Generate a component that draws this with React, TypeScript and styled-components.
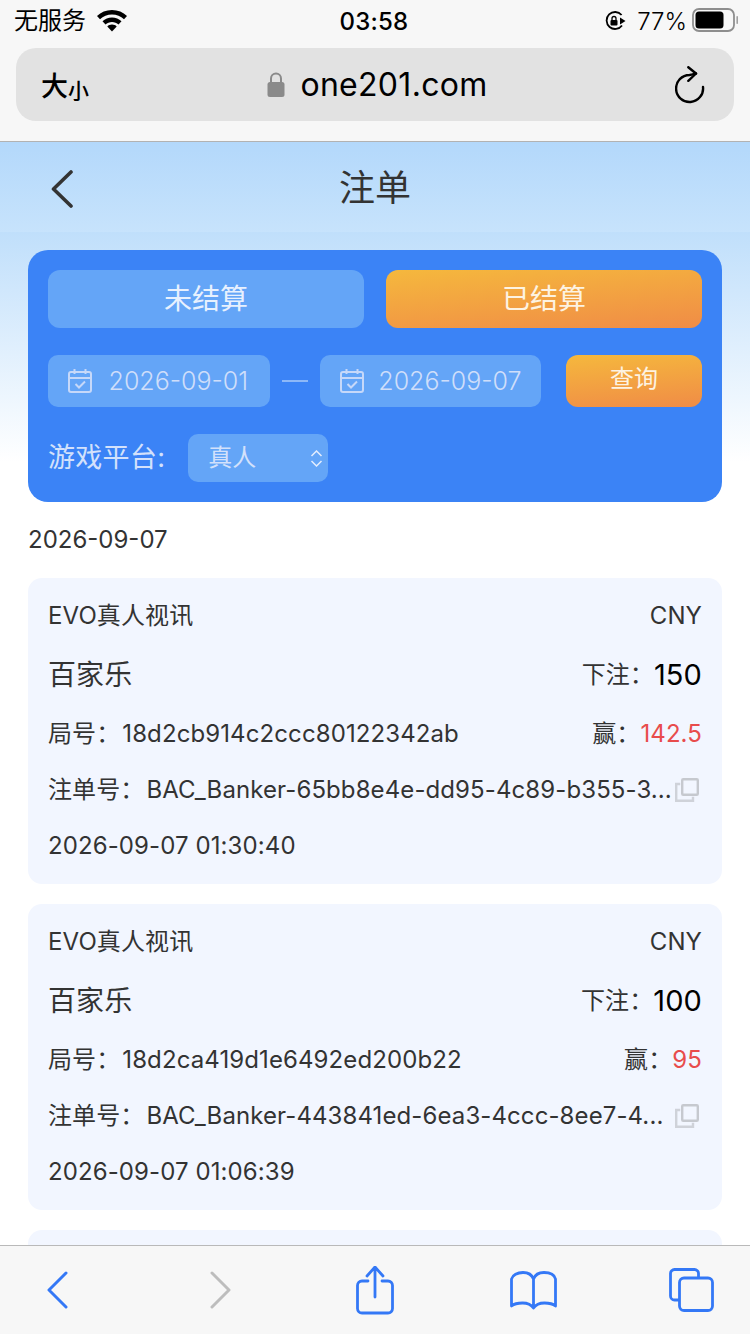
import React from "react";
import styled, { createGlobalStyle } from "styled-components";

const GlobalStyle = createGlobalStyle`
  html, body {
    margin: 0;
    padding: 0;
    background: #fff;
  }
  * {
    box-sizing: border-box;
  }
  body {
    font-family: Inter, "Noto Sans CJK SC", sans-serif;
    -webkit-font-smoothing: antialiased;
  }
`;

const Styles = {
  Page: styled.div`
    width: 750px;
    height: 1334px;
    display: flex;
    flex-direction: column;
    overflow: hidden;
  `,
  Chrome: styled.div`
    height: 142px;
    flex: none;
    background: #f7f7f7;
    border-bottom: 1px solid #b2b2b2;
  `,
  StatusBar: styled.div`
    height: 42px;
    margin-bottom: 6px;
    padding: 0 12px 0 14px;
    display: grid;
    grid-template-columns: 1fr auto 1fr;
    align-items: center;
    color: #000;
  `,
  StatusLeft: styled.div`
    display: flex;
    align-items: center;
    gap: 11px;
    font-size: 24px;
    line-height: 40px;
  `,
  Clock: styled.div`
    font-size: 24px;
    font-weight: 500;
    letter-spacing: 0.2px;
    margin-right: 4px;
  `,
  StatusRight: styled.div`
    display: flex;
    align-items: center;
    justify-content: flex-end;
    gap: 11px;
    font-size: 24px;
    font-weight: 300;
    svg:last-child {
      margin: 0 0 3px -6px;
    }
  `,
  AddressBar: styled.div`
    height: 73px;
    margin: 0 16px;
    padding: 0 29px 0 25px;
    border-radius: 20px;
    background: #e2e2e2;
    display: grid;
    grid-template-columns: 1fr auto 1fr;
    align-items: center;
  `,
  FontSize: styled.div`
    font-weight: 500;
    font-size: 27px;
    display: flex;
    align-items: flex-end;
    color: #000;
    small {
      font-size: 21px;
      font-weight: 500;
      margin-bottom: 0;
    }
  `,
  Domain: styled.div`
    display: flex;
    align-items: center;
    gap: 15px;
    font-size: 32px;
    color: #000;
    letter-spacing: 0.3px;
    margin-left: 9px;
  `,
  Reload: styled.div`
    display: flex;
    justify-content: flex-end;
  `,
  Content: styled.div`
    flex: 1;
    min-height: 0;
    overflow: hidden;
    padding: 0 28px;
    background: linear-gradient(180deg, #b3d8fb 0, #c7e3fc 90px, #c0dffb 90px, #ffffff 320px);
  `,
  Header: styled.div`
    height: 90px;
    display: flex;
    align-items: center;
    justify-content: center;
    position: relative;
    font-size: 36px;
    color: #333;
    padding-bottom: 4px;
    svg {
      position: absolute;
      left: 23px;
      top: 28px;
    }
  `,
  Filter: styled.div`
    margin-top: 18px;
    height: 252px;
    padding: 20px;
    border-radius: 20px;
    background: #3b83f6;
    display: flex;
    flex-direction: column;
  `,
  Tabs: styled.div`
    display: grid;
    grid-template-columns: 1fr 1fr;
    gap: 22px;
  `,
  Tab: styled.div<{ active?: boolean }>`
    height: 58px;
    padding-bottom: 4px;
    border-radius: 12px;
    display: flex;
    align-items: center;
    justify-content: center;
    font-size: 28px;
    color: ${({ active }) => (active ? "#fdf3e2" : "#e8f1fe")};
    background: ${({ active }) =>
      active ? "linear-gradient(175deg, #f5b83d, #f08c46)" : "#64a5f7"};
  `,
  DateRow: styled.div`
    margin-top: 27px;
    display: flex;
    align-items: center;
  `,
  DateField: styled.div`
    width: 222px;
    height: 52px;
    border-radius: 10px;
    background: #64a5f7;
    display: flex;
    align-items: center;
    padding: 0 6px 0 19px;
    font-size: 25px;
    font-weight: 300;
    color: #cfdefa;
    white-space: nowrap;
    span {
      flex: 1;
      text-align: center;
    }
  `,
  Dash: styled.div`
    width: 26px;
    height: 2px;
    margin: 0 12px;
    background: #8db8f8;
  `,
  Query: styled.div`
    margin-left: 25px;
    width: 136px;
    height: 52px;
    padding-bottom: 9px;
    border-radius: 12px;
    background: linear-gradient(175deg, #f5b83d, #f08c46);
    color: #fdf3e2;
    font-size: 24px;
    display: flex;
    align-items: center;
    justify-content: center;
  `,
  PlatformRow: styled.div`
    margin-top: 27px;
    display: flex;
    align-items: center;
    gap: 23px;
    font-size: 27px;
    color: #d3e1fb;
  `,
  PlatformLabel: styled.span`
    padding-bottom: 5px;
    letter-spacing: 0.3px;
  `,
  Select: styled.div`
    width: 140px;
    height: 48px;
    border-radius: 10px;
    background: #64a5f7;
    position: relative;
    padding: 0 0 5px 20px;
    display: flex;
    align-items: center;
    font-size: 24px;
    color: #d3e1fb;
    svg {
      position: absolute;
      right: 5px;
      top: 16px;
    }
  `,
  DateTitle: styled.div`
    margin-top: 23px;
    font-size: 24px;
    line-height: 30px;
    color: #333;
  `,
  CardList: styled.div`
    margin-top: 23px;
    display: flex;
    flex-direction: column;
    gap: 20px;
  `,
  Card: styled.div`
    height: 306px;
    flex: none;
    padding: 21px 20px 0;
    border-radius: 14px;
    background: #f2f6ff;
    color: #333;
  `,
  Row: styled.div<{ h: number; mt?: number }>`
    height: ${({ h }) => h}px;
    margin-top: ${({ mt }) => mt || 0}px;
    display: flex;
    align-items: center;
    justify-content: space-between;
    white-space: nowrap;
  `,
  Text: styled.div<{ size: number; color?: string }>`
    font-size: ${({ size }) => size}px;
    line-height: 34px;
    color: ${({ color }) => color || "#333"};
    letter-spacing: 0.1px;
  `,
  Label: styled.span`
    margin-right: 2px;
  `,
  Pair: styled.div`
    display: flex;
    align-items: center;
  `,
  Copy: styled.div`
    flex: none;
    margin-right: 3px;
    display: flex;
  `,
  Toolbar: styled.div`
    height: 89px;
    flex: none;
    background: #f7f7f7;
    border-top: 1px solid #b9b9b9;
    padding-left: 47px;
    display: grid;
    grid-template-columns: 163px 146px 154px 159px auto;
    align-items: center;
    justify-items: start;
    svg {
      display: block;
    }
  `,
};

const records = [
  { bet: "150", round: "18d2cb914c2ccc80122342ab", win: "142.5", order: "BAC_Banker-65bb8e4e-dd95-4c89-b355-3...", time: "2026-09-07 01:30:40" },
  { bet: "100", round: "18d2ca419d1e6492ed200b22", win: "95", order: "BAC_Banker-443841ed-6ea3-4ccc-8ee7-4...", time: "2026-09-07 01:06:39" },
];

const CalendarIcon = () => (
  <svg width="26" height="26" viewBox="0 0 26 26" fill="none" stroke="#c6d8f9" strokeWidth="2">
    <rect x="2" y="4" width="22" height="20" rx="2" />
    <path d="M2 10h22M7.500 1v5M18.500 1v5M8.500 16l3.500 3.500 6-6" />
  </svg>
);

const CopyIcon = () => (
  <svg width="24" height="24" viewBox="0 0 24 24" fill="none" stroke="#c6c9cf" strokeWidth="2.400">
    <rect x="7.200" y="1.200" width="15.600" height="15.600" rx="1" />
    <path d="M5.200 6H1.200v16.800h16.800v-4" strokeOpacity="0.8" />
  </svg>
);

const App = () => {
  return (
    <Styles.Page>
      <GlobalStyle />
      <Styles.Chrome>
        <Styles.StatusBar>
          <Styles.StatusLeft>
            <span>无服务</span>
            <svg width="30" height="22" viewBox="0 0 30 22" fill="#000">
              <path d="M15 0C9 0 4 2.300 0 6l3 3.200C6.200 6.200 10.400 4.500 15 4.500s8.800 1.700 12 4.700L30 6C26 2.300 21 0 15 0z" />
              <path d="M15 7.500c-3.700 0-7 1.400-9.500 3.800l3 3.200c1.700-1.600 4-2.600 6.500-2.600s4.800 1 6.500 2.600l3-3.200C22 8.900 18.700 7.500 15 7.500z" />
              <path d="M15 14.500c-1.900 0-3.500.7-4.700 1.900L15 21.500l4.700-5.100c-1.200-1.200-2.800-1.900-4.700-1.900z" />
            </svg>
          </Styles.StatusLeft>
          <Styles.Clock>03:58</Styles.Clock>
          <Styles.StatusRight>
            <svg width="21" height="20" viewBox="0 0 21 20" fill="none" stroke="#000" strokeWidth="1.800">
              <path d="M17 14.500A8.500 8.500 0 1 1 16.600 4" />
              <path d="M15 6.500l5.500 3.500-5.500 3.500z" fill="#000" stroke="none" />
              <rect x="5.500" y="9" width="7" height="5.500" rx="1" fill="#000" stroke="none" />
              <path d="M7 9V7.500a2 2 0 0 1 4 0V9" strokeWidth="1.300" />
            </svg>
            <span>77%</span>
            <svg width="46" height="24" viewBox="0 0 46 24">
              <rect x="1" y="1" width="41" height="22" rx="6" fill="none" stroke="#8e8e8e" strokeWidth="1.800" />
              <rect x="3.500" y="3.500" width="28" height="17" rx="3.500" fill="#000" />
              <rect x="44.400" y="8" width="1.600" height="8" rx="0.800" fill="#a0a0a0" />
            </svg>
          </Styles.StatusRight>
        </Styles.StatusBar>
        <Styles.AddressBar>
          <Styles.FontSize>大<small>小</small></Styles.FontSize>
          <Styles.Domain>
            <svg width="18" height="26" viewBox="0 0 18 26">
              <path d="M4 11V6.500a5 5 0 0 1 10 0V11" fill="none" stroke="#8a8a8a" strokeWidth="2" />
              <rect x="0.500" y="10" width="17" height="15" rx="2.500" fill="#8a8a8a" />
            </svg>
            <span>one201.com</span>
          </Styles.Domain>
          <Styles.Reload>
            <svg width="30" height="38" viewBox="0 0 30 38" fill="none" stroke="#000" strokeWidth="2.400" strokeLinecap="round" strokeLinejoin="round">
              <path d="M28 21A13.500 13.500 0 1 1 14.500 9C17 8.700 19 8 21 7.500" />
              <path d="M13.300 1.200L21 7.500l-7.700 7.300" />
            </svg>
          </Styles.Reload>
        </Styles.AddressBar>
      </Styles.Chrome>

      <Styles.Content>
        <Styles.Header>
          <svg width="22" height="38" viewBox="0 0 22 38" fill="none" stroke="#333" strokeWidth="3.600" strokeLinecap="round" strokeLinejoin="round">
            <path d="M20 2L2.500 19 20 36" />
          </svg>
          注单
        </Styles.Header>
        <Styles.Filter>
          <Styles.Tabs>
            <Styles.Tab>未结算</Styles.Tab>
            <Styles.Tab active>已结算</Styles.Tab>
          </Styles.Tabs>
          <Styles.DateRow>
            <Styles.DateField><CalendarIcon /><span>2026-09-01</span></Styles.DateField>
            <Styles.Dash />
            <Styles.DateField><CalendarIcon /><span>2026-09-07</span></Styles.DateField>
            <Styles.Query>查询</Styles.Query>
          </Styles.DateRow>
          <Styles.PlatformRow>
            <Styles.PlatformLabel>游戏平台:</Styles.PlatformLabel>
            <Styles.Select>
              真人
              <svg width="13" height="17" viewBox="0 0 13 17" fill="none" stroke="#e4edfd" strokeWidth="1.500">
                <path d="M1.500 6l5-5 5 5M1.500 11l5 5 5-5" />
              </svg>
            </Styles.Select>
          </Styles.PlatformRow>
        </Styles.Filter>
        <Styles.DateTitle>2026-09-07</Styles.DateTitle>
        <Styles.CardList>
          {records.map((item, key) => {
            return (
              <Styles.Card key={key}>
                <Styles.Row h={34}>
                  <Styles.Text size={24}>EVO真人视讯</Styles.Text>
                  <Styles.Text size={24}>CNY</Styles.Text>
                </Styles.Row>
                <Styles.Row h={50} mt={17}>
                  <Styles.Text size={28}>百家乐</Styles.Text>
                  <Styles.Pair>
                    <Styles.Text size={24}>下注：</Styles.Text>
                    <Styles.Text size={29} color="#000">{item.bet}</Styles.Text>
                  </Styles.Pair>
                </Styles.Row>
                <Styles.Row h={34} mt={17}>
                  <Styles.Text size={24}><Styles.Label>局号：</Styles.Label>{item.round}</Styles.Text>
                  <Styles.Pair>
                    <Styles.Text size={24}>赢：</Styles.Text>
                    <Styles.Text size={24} color="#e84c4c">{item.win}</Styles.Text>
                  </Styles.Pair>
                </Styles.Row>
                <Styles.Row h={34} mt={22}>
                  <Styles.Text size={24}><Styles.Label>注单号：</Styles.Label>{item.order}</Styles.Text>
                  <Styles.Copy><CopyIcon /></Styles.Copy>
                </Styles.Row>
                <Styles.Row h={34} mt={22}>
                  <Styles.Text size={24}>{item.time}</Styles.Text>
                </Styles.Row>
              </Styles.Card>
            );
          })}
          <Styles.Card />
        </Styles.CardList>
      </Styles.Content>

      <Styles.Toolbar>
        <svg width="21" height="38" viewBox="0 0 21 38" fill="none" stroke="#3478f6" strokeWidth="3" strokeLinecap="round" strokeLinejoin="round">
          <path d="M19 2L2 19l17 17" />
        </svg>
        <svg width="21" height="38" viewBox="0 0 21 38" fill="none" stroke="#bdbdbd" strokeWidth="3" strokeLinecap="round" strokeLinejoin="round">
          <path d="M2 2l17 17L2 36" />
        </svg>
        <svg width="38" height="49" viewBox="0 0 38 49" fill="none" stroke="#3478f6" strokeWidth="2.800" strokeLinecap="round" strokeLinejoin="round">
          <path d="M19 31V2M11 10l8-9 8 9" />
          <path d="M12 15H6a4.500 4.500 0 0 0-4.500 4.500v23A4.500 4.500 0 0 0 6 47h26a4.500 4.500 0 0 0 4.500-4.500v-23A4.500 4.500 0 0 0 32 15h-6" />
        </svg>
        <svg width="47" height="39" viewBox="0 0 47 39" fill="none" stroke="#3478f6" strokeWidth="2.800" strokeLinecap="round" strokeLinejoin="round">
          <path d="M23.500 8v29M23.500 8C22 4 18.500 1.500 13 1.500S2.500 4 1.500 8v27c3-2.500 6-3 11-3 5 0 9 2 11 5 2-3 6-5 11-5 5 0 8 .5 11 3V8c-1-4-5-6.500-11.500-6.500S25 4 23.500 8z" />
        </svg>
        <svg width="45" height="44" viewBox="0 0 45 44" fill="none" stroke="#3478f6" strokeWidth="2.800" strokeLinejoin="round">
          <path d="M10 32H5.500a4 4 0 0 1-4-4V5.500a4 4 0 0 1 4-4h20a4 4 0 0 1 4 4V10" />
          <rect x="10.500" y="10" width="33" height="32.500" rx="4.500" />
        </svg>
      </Styles.Toolbar>
    </Styles.Page>
  );
};

export default App;
